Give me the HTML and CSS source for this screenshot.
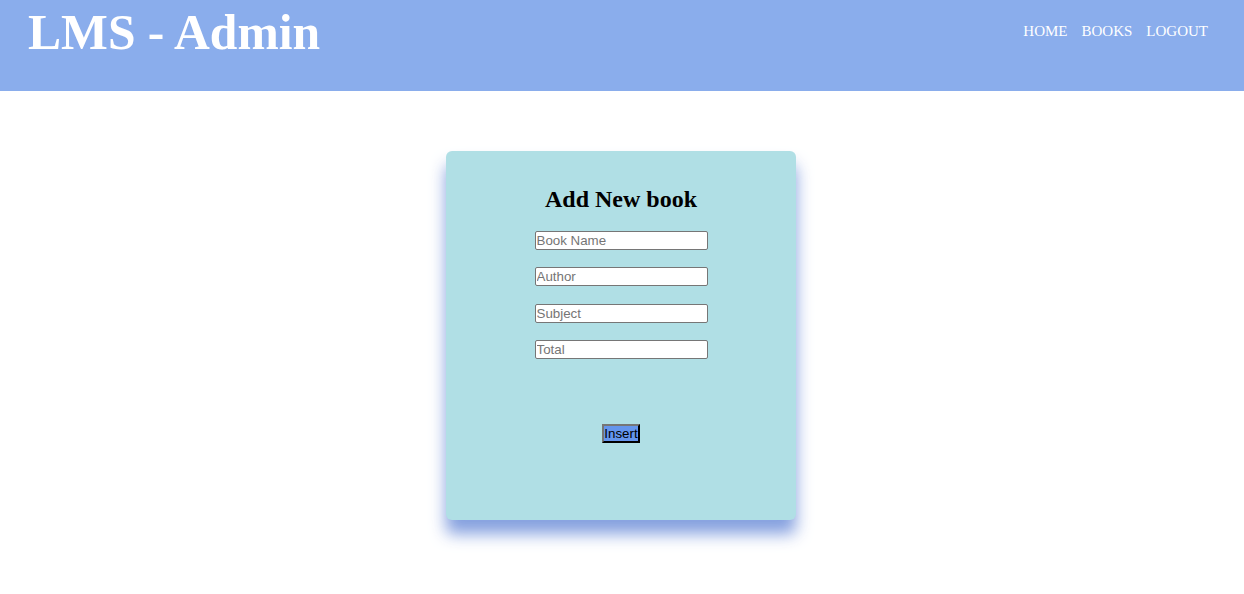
FILE: index.html
```html
<!DOCTYPE html>
<html>
<head>
<meta charset="utf-8">
<title>LMS - Admin</title>
<link rel="stylesheet" href="styles.css">
</head>
<body>
<header class="topbar">
  <h1 class="brand">LMS - Admin</h1>
  <nav class="nav">
    <a href="#">HOME</a>
    <a href="#">BOOKS</a>
    <a href="#">LOGOUT</a>
  </nav>
</header>
<main class="main">
  <form class="card">
    <h2 class="card-title">Add New book</h2>
    <input class="field" type="text" placeholder="Book Name">
    <input class="field" type="text" placeholder="Author">
    <input class="field" type="text" placeholder="Subject">
    <input class="field" type="text" placeholder="Total">
    <button class="btn" type="button">Insert</button>
  </form>
</main>
</body>
</html>
```

FILE: styles.css
```css
html, body {
  margin: 0;
  padding: 0;
  background: #ffffff;
  font-family: "Liberation Serif", "Times New Roman", serif;
}

body {
  min-height: 594px;
}

.topbar {
  height: 91px;
  background: #8aadec;
  display: flex;
  justify-content: space-between;
  align-items: flex-start;
  padding: 0 36px 0 28px;
  box-sizing: border-box;
}

.brand {
  margin: 4px 0 0 0;
  font-size: 49.6px;
  font-weight: bold;
  color: #ffffff;
  line-height: 57px;
}

.nav {
  display: flex;
  gap: 14px;
  margin-top: 23px;
}

.nav a {
  color: #ffffff;
  text-decoration: none;
  font-size: 15px;
}

.main {
  display: flex;
  justify-content: center;
  padding-top: 60px;
  padding-right: 2px;
  padding-bottom: 70px;
}

.card {
  width: 350px;
  height: 369px;
  box-sizing: border-box;
  background: #b0dfe5;
  border-radius: 6px;
  box-shadow: 0 14px 16px rgba(120, 150, 220, 0.9);
  display: flex;
  flex-direction: column;
  align-items: center;
  padding-top: 34px;
}

.card-title {
  margin: 0 0 18px 0;
  font-size: 24px;
  font-weight: bold;
  line-height: 28px;
  color: #000;
}

.field {
  width: 173px;
  height: 19px;
  box-sizing: border-box;
  border: 1px solid #767676;
  border-radius: 2px;
  padding: 0 1px;
  margin: 0 0 17.3px 0;
  font-family: "Liberation Sans", Arial, sans-serif;
  font-size: 13.333px;
  background: #fff;
  color: #000;
}

.field::placeholder {
  color: #757575;
}

.btn {
  margin-top: 48px;
  height: 19px;
  padding: 0;
  box-sizing: border-box;
  background: #6495ed;
  border: 2px outset #767676;
  border-right-color: #333;
  border-bottom-color: #333;
  font-family: "Liberation Sans", Arial, sans-serif;
  font-size: 13.333px;
  line-height: 15px;
  color: #000;
}
```
